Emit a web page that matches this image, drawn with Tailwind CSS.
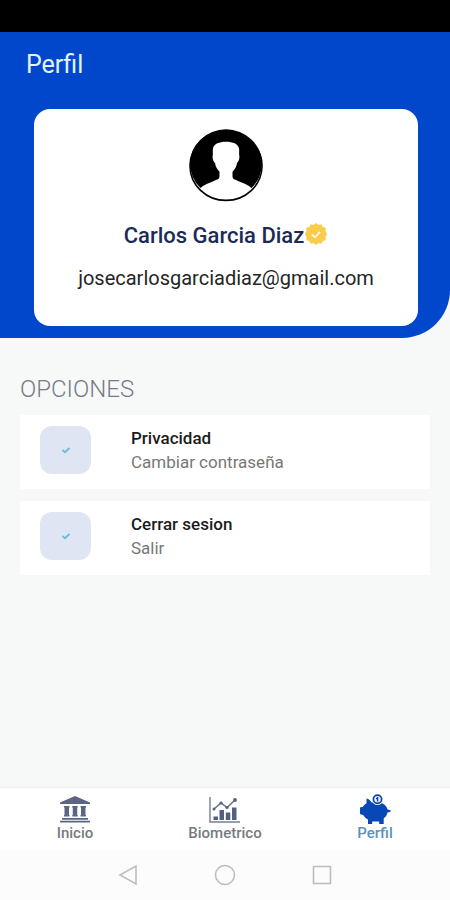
<!DOCTYPE html>
<html lang="es">
<head>
<meta charset="utf-8">
<meta name="viewport" content="width=device-width, initial-scale=1">
<title>Perfil</title>
<script src="https://cdn.jsdelivr.net/npm/@tailwindcss/browser@4"></script>
</head>
<body class="flex min-h-screen flex-col bg-[#f6f9f8] font-['Roboto',sans-serif]">
<div class="h-8 bg-black"></div>
<header class="rounded-br-[48px] bg-[#0047cc] pr-8 pb-3 pl-8">
  <h1 class="-ml-1.5 pt-[19px] pb-[30px] text-[25px] leading-7 text-[#e4f3ff]">Perfil</h1>
  <section class="ml-0.5 flex flex-col items-center rounded-2xl bg-white pt-5 pb-[33px]">
    <svg class="h-[74px] w-[76px]" viewBox="0 0 76 72" preserveAspectRatio="none" role="img" aria-label="Avatar">
      <ellipse cx="38" cy="36" rx="36" ry="33.500" fill="#fff" stroke="#000" stroke-width="1.600"/>
      <path d="M12.500 57.500A36 33.500 0 1 1 63.500 57.500C60 54 55 52.500 50 50.500C46 49 44.500 48.500 44.500 46V41.500C47 39 48.500 36.500 49 33C50.500 32 51.800 28.500 51.300 26C50.800 24 51.500 22 51 19C50 14.500 45 12.500 38 12.500S26 14.500 25 19C24.500 22 25.200 24 24.700 26C24.200 28.500 25.500 32 27 33C27.500 36.500 29 39 31.500 41.500V46C31.500 48.500 30 49 26 50.500C21 52.500 16 54 12.500 57.500Z" fill="#000"/>
    </svg>
    <div class="mt-[18px] flex items-center">
      <h2 class="text-[22px] leading-[30px] font-medium text-[#1c2b55]">Carlos Garcia Diaz</h2>
      <svg class="mb-1 size-6" viewBox="0 0 24 24" role="img" aria-label="Verificado">
        <path d="M12 1l2.400 2 3-.8 1.300 2.700 3 .9-.2 3.100L23 12l-1.500 3.100.2 3.100-3 .9-1.300 2.700-3-.8L12 23l-2.400-2-3 .8-1.300-2.700-3-.9.200-3.100L1 12l1.500-3.100-.2-3.100 3-.9 1.300-2.700 3 .8z" fill="#f9cc4b"/>
        <path d="M8 12.500l3 2.800 5-5.500" fill="none" stroke="#fff8df" stroke-width="1.800"/>
      </svg>
    </div>
    <p class="mt-3 text-xl leading-[30px] text-[#252525]">josecarlosgarciadiaz@gmail.com</p>
  </section>
</header>
<main class="flex-1 px-5 pt-[37px]">
  <h2 class="text-2xl leading-7 font-light text-[#767b87]">OPCIONES</h2>
  <div class="mt-3 flex flex-col gap-3">
    <button type="button" class="flex h-[74px] items-center bg-white px-5 pb-1 text-left">
      <span class="grid h-12 w-[51px] place-items-center rounded-xl bg-[#dfe5f3]">
        <svg class="size-3" viewBox="0 0 12 12" fill="none" stroke="#68bddd" stroke-width="1.800" aria-hidden="true"><path d="M2.500 6l2.500 2.200L9.500 4"/></svg>
      </span>
      <span class="ml-10 flex flex-col">
        <span class="text-[17px] leading-6 font-medium text-[#1c1c1c]">Privacidad</span>
        <span class="text-[17px] leading-6 text-[#777]">Cambiar contraseña</span>
      </span>
    </button>
    <button type="button" class="flex h-[74px] items-center bg-white px-5 pb-1 text-left">
      <span class="grid h-12 w-[51px] place-items-center rounded-xl bg-[#dfe5f3]">
        <svg class="size-3" viewBox="0 0 12 12" fill="none" stroke="#68bddd" stroke-width="1.800" aria-hidden="true"><path d="M2.500 6l2.500 2.200L9.500 4"/></svg>
      </span>
      <span class="ml-10 flex flex-col">
        <span class="text-[17px] leading-6 font-medium text-[#1c1c1c]">Cerrar sesion</span>
        <span class="text-[17px] leading-6 text-[#777]">Salir</span>
      </span>
    </button>
  </div>
</main>
<nav class="grid grid-cols-3 border-t border-[#eef0f1] bg-white pt-1.5 pb-2.5 text-[15px] leading-[14px] font-medium text-[#777b80]">
  <a href="#inicio" class="flex flex-col items-center">
    <svg class="h-8 w-9" viewBox="0 0 36 32" fill="#5b6685" aria-hidden="true">
      <path d="M18 2L33 8.500V10H3V8.500z"/>
      <path d="M7 12h5.500v1.500H12V21h.5v1.500H7V21h.5v-7.500H7zM15.250 12h5.500v1.500h-.5V21h.5v1.500h-5.500V21h.5v-7.500h-.5zM23.500 12H29v1.500h-.5V21h.5v1.500h-5.500V21h.5v-7.500h-.5z"/>
      <path d="M5 24h26v1.800H5zM3 26.800h30v1.700H3z"/>
    </svg>
    Inicio
  </a>
  <a href="#biometrico" class="flex flex-col items-center">
    <svg class="h-8 w-9" viewBox="0 0 36 32" aria-hidden="true">
      <path d="M3 3v25h30" fill="none" stroke="#777f96" stroke-width="1.400"/>
      <path d="M6.500 22.500h4.500V26H6.500zM12.500 16H17v10h-4.500zM18.800 18.500h4.500V26h-4.500zM25 13.500h4.500V26H25z" fill="#53617f"/>
      <path d="M7 15l7-6 6 4.500L28 6" fill="none" stroke="#66708a" stroke-width="1.500"/>
      <g fill="#53617f"><circle cx="7" cy="15" r="1.500"/><circle cx="14" cy="9" r="1.600"/><circle cx="20" cy="13.500" r="1.600"/><circle cx="28" cy="6" r="1.900"/></g>
    </svg>
    Biometrico
  </a>
  <a href="#perfil" aria-current="page" class="flex flex-col items-center text-[#5a91bd]">
    <svg class="h-8 w-9" viewBox="0 0 36 32" aria-hidden="true">
      <path d="M9.500 4.500c2.500.5 4 2 5 4 4-1 10-.6 13 2.300 2 1.800 2.700 3.300 3 4.700l3 .8v1.500l-3 .7c-.5 2.600-2 4.500-3.800 6V30h-4.500v-2.500h-7V30H11v-4.500c-2-1-3.400-2.300-4.500-4.300L3 20v-6.500l3-.7c.8-1.700 2-2.800 3.500-3.600z" fill="#0747b6"/>
      <circle cx="20.500" cy="5.500" r="5.500" fill="#fff"/>
      <circle cx="20.500" cy="5.300" r="4.100" fill="#e7f1ff" stroke="#0c459d" stroke-width="1.700"/>
      <path d="M20.600 3v4.600M19 4.500h1.600" stroke="#0c459d" stroke-width="1.400"/>
    </svg>
    Perfil
  </a>
</nav>
<div class="flex h-[50px] items-center justify-around bg-[#fcfcfc] px-20">
  <button type="button" aria-label="Atrás"><svg class="size-6" viewBox="0 0 24 24" fill="none" stroke="#bdbdbd" stroke-width="1.600"><path d="M20 3v18L4 12z"/></svg></button>
  <button type="button" aria-label="Inicio"><svg class="size-6" viewBox="0 0 24 24" fill="none" stroke="#bdbdbd" stroke-width="1.600"><circle cx="12" cy="12" r="9.500"/></svg></button>
  <button type="button" aria-label="Recientes"><svg class="size-6" viewBox="0 0 24 24" fill="none" stroke="#bdbdbd" stroke-width="1.600"><path d="M3.500 3.500h17v17h-17z"/></svg></button>
</div>
</body>
</html>
